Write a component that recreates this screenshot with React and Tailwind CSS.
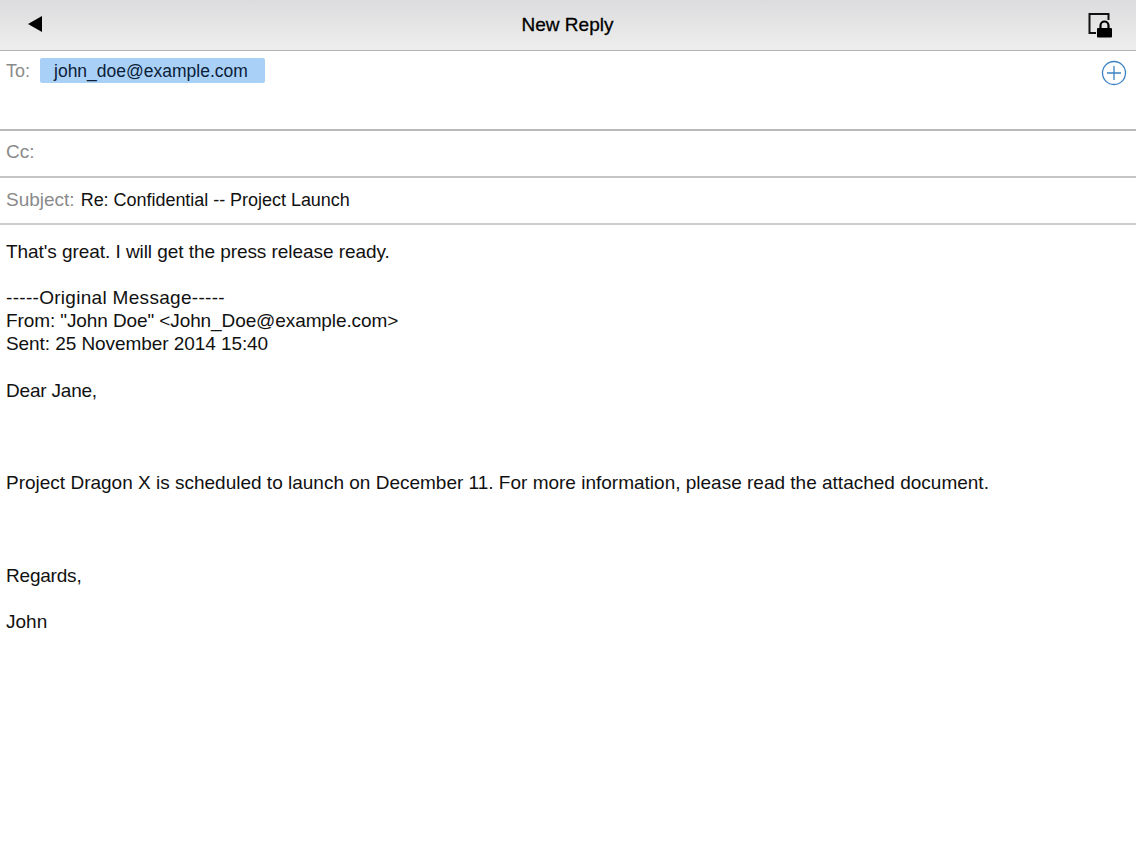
export default function App() {
  return (
    <div className="w-[1136px] h-[852px] bg-white overflow-hidden font-['Liberation_Sans',Arial,sans-serif] text-[#111]">
      <header className="h-[51px] border-b border-[#b4b4b4] bg-gradient-to-b from-[#dcdcde] to-[#eeeeee] flex items-center justify-between pl-[27px] pr-[23px]">
        <svg width="16" height="18" viewBox="0 0 16 18" className="mb-[3px]"><path d="M1 9 L15 1 V17 Z" fill="#000" /></svg>
        <div className="text-[19px] font-normal text-black pl-[5px] pt-[1px] [-webkit-text-stroke:0.3px_black]">New Reply</div>
        <svg width="26" height="26" viewBox="0 0 26 26" className="mb-[1px]">
          <path d="M9 21 H2.5 V2 H21.5 V8" fill="none" stroke="#111" strokeWidth="2" />
          <path d="M13.5 17 V13.5 a4 4 0 0 1 8 0 V17" fill="none" stroke="#000" strokeWidth="2.2" />
          <rect x="10" y="16" width="15" height="9.5" rx="1" fill="#000" />
        </svg>
      </header>
      <div className="h-[80px] border-b-2 border-[#b9b9b9] flex items-start justify-between pl-[6px] pr-[9px]">
        <div className="flex items-start mt-[7px]">
          <span className="text-[18px] leading-[25px] pt-[1px] text-[#8a8a8a]">To:</span>
          <span className="ml-[10px] w-[225px] h-[25px] rounded-[2px] bg-[#a9d1f7] pl-[14px] pt-[1px] text-[17.5px] leading-[25px] text-[#0c2038]">john_doe@example.com</span>
        </div>
        <svg width="26" height="26" viewBox="0 0 26 26" className="mt-[9px]">
          <circle cx="13" cy="13" r="11.5" fill="none" stroke="#3b82c4" strokeWidth="1.3" />
          <path d="M13 6 V20 M6 13 H20" stroke="#3b82c4" strokeWidth="1.3" />
        </svg>
      </div>
      <div className="h-[47px] border-b-2 border-[#c4c4c4] flex items-center pl-[6px] pb-[3px]">
        <span className="text-[19px] text-[#8a8a8a]">Cc:</span>
      </div>
      <div className="h-[47px] border-b-2 border-[#cccccc] flex items-center pl-[6px] gap-[6px]">
        <span className="text-[19px] text-[#8a8a8a]">Subject:</span>
        <span className="text-[18px] tracking-[-0.03px] text-[#111]">Re: Confidential -- Project Launch</span>
      </div>
      <div className="pl-[6px] pt-[15px] text-[19px] leading-[23.1px]">
        <p className="tracking-[-0.06px]">That's great. I will get the press release ready.</p>
        <p className="mt-[23px] tracking-[0.3px]">-----Original Message-----</p>
        <p className="tracking-[-0.1px]">From: "John Doe" &lt;John_Doe@example.com&gt;</p>
        <p className="tracking-[-0.07px]">Sent: 25 November 2014 15:40</p>
        <p className="mt-[24px] tracking-[-0.2px]">Dear Jane,</p>
        <p className="mt-[69px]">Project Dragon X is scheduled to launch on December 11. For more information, please read the attached document.</p>
        <p className="mt-[69px] tracking-[-0.2px]">Regards,</p>
        <p className="mt-[23px]">John</p>
      </div>
    </div>
  );
}
